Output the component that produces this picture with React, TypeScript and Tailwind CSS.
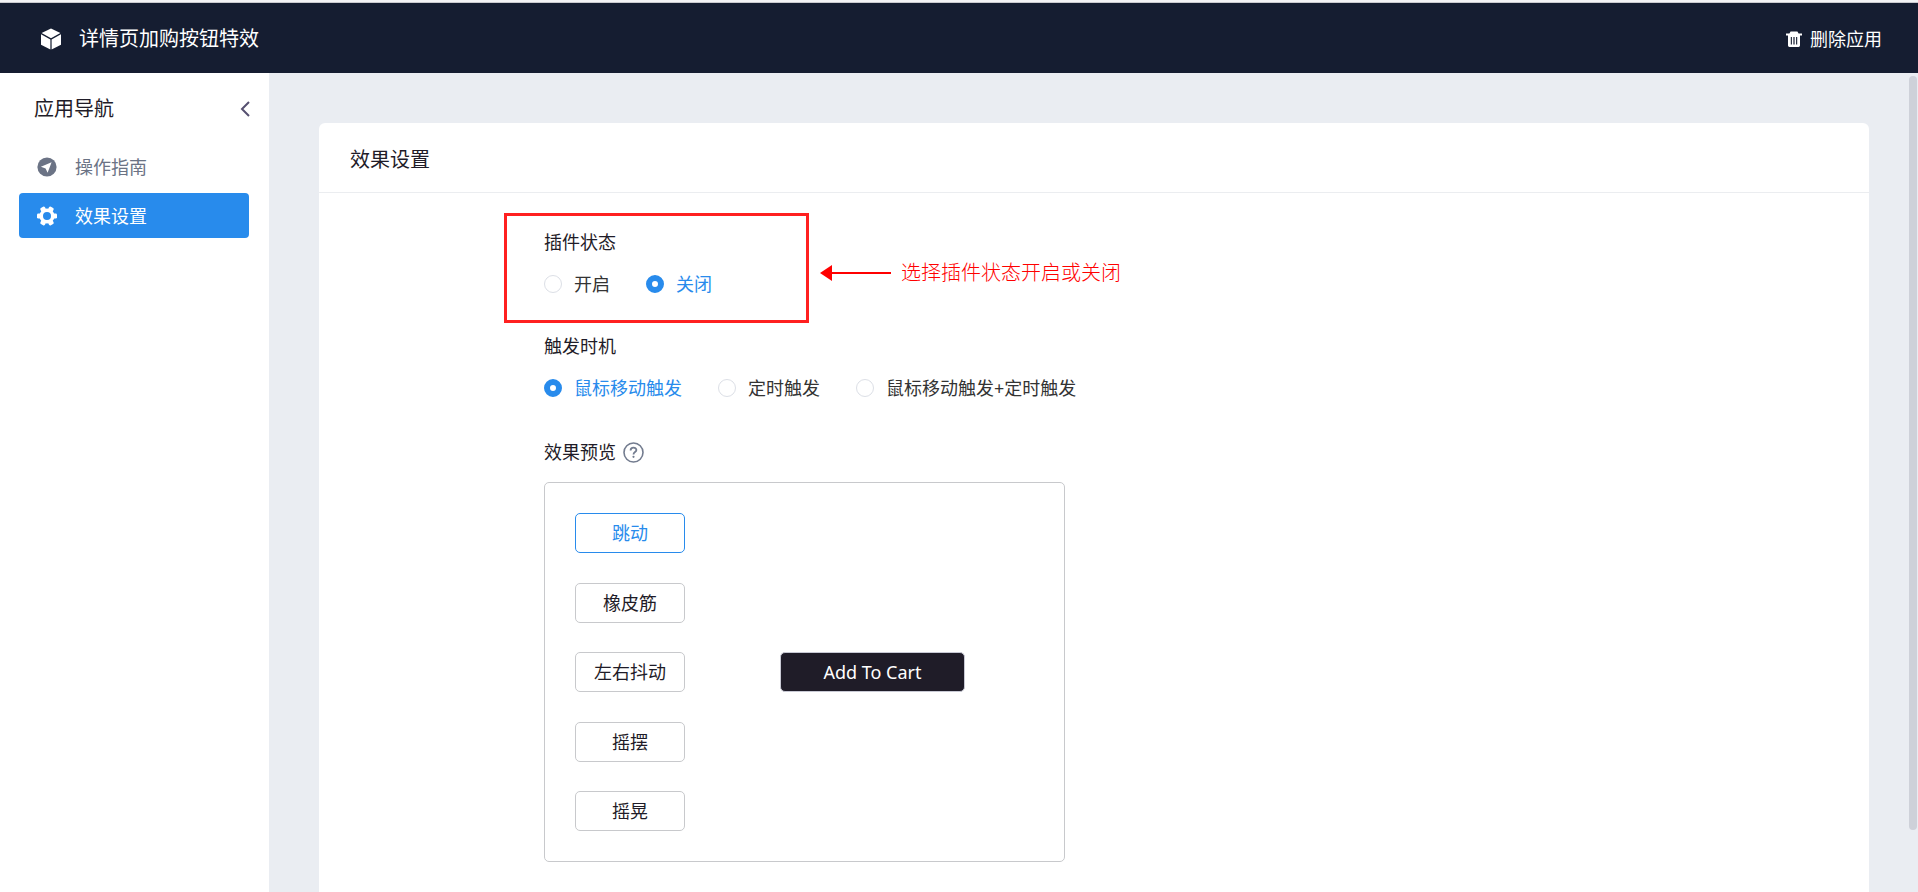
import { useState } from "react";

const EFFECTS = ["跳动", "橡皮筋", "左右抖动", "摇摆", "摇晃"];

function BoxIcon() {
    return <svg width="20" height="22" viewBox="0 0 20 22" fill="#fff">
        <path d="M10 0.4L19.4 5.1L10 10.3L0.6 5.1Z" />
        <path d="M0 6.3L9.4 11.5V21.6L0 16.8Z" />
        <path d="M20 6.3L10.6 11.5V21.6L20 16.8Z" />
    </svg>;
}

function TrashIcon() {
    return <svg width="16" height="16" viewBox="0 0 16 16" fill="#fff">
        <path d="M0 2.4H3.4L4.6 0.6H11.4L12.6 2.4H16V4.4H0Z" />
        <path fillRule="evenodd" d="M2 4H14V14.6Q14 16 12.6 16H3.4Q2 16 2 14.6ZM4.8 6V13.4H5.9V6ZM7.4 6V13.4H8.6V6ZM10.1 6V13.4H11.2V6Z" />
    </svg>;
}

function GuideIcon() {
    return <svg width="20" height="20" viewBox="0 0 20 20">
        <circle cx="10" cy="10" r="9.6" fill="#6b7385" />
        <path d="M14.6 5.2L3.9 9.8L8.6 11.4L10.6 15.8Z" fill="#fff" />
    </svg>;
}

function GearIcon() {
    return <svg width="20" height="20" viewBox="0 0 20 20" fill="#fff">
        <circle cx="10" cy="10" r="5.8" fill="none" stroke="#fff" strokeWidth="3.6" />
        <rect x="0" y="7.4" width="4" height="5.2" rx="1.4" />
        <rect x="0" y="7.4" width="4" height="5.2" rx="1.4" transform="rotate(60 10 10)" />
        <rect x="0" y="7.4" width="4" height="5.2" rx="1.4" transform="rotate(120 10 10)" />
        <rect x="0" y="7.4" width="4" height="5.2" rx="1.4" transform="rotate(180 10 10)" />
        <rect x="0" y="7.4" width="4" height="5.2" rx="1.4" transform="rotate(240 10 10)" />
        <rect x="0" y="7.4" width="4" height="5.2" rx="1.4" transform="rotate(300 10 10)" />
    </svg>;
}

function HelpIcon() {
    return <svg width="21" height="21" viewBox="0 0 21 21" fill="none" stroke="#737c8f">
        <circle cx="10.5" cy="10.5" r="9.5" strokeWidth="1.6" />
        <path d="M7.6 8.4C7.6 4.7 13.4 4.7 13.4 8.1C13.4 10.1 10.5 10.1 10.5 12.4" strokeWidth="1.8" />
        <circle cx="10.5" cy="14.8" r="1.1" fill="#737c8f" stroke="none" />
    </svg>;
}

function RadioGroup({ name, options, value, onChange }: {
    name: string;
    options: string[];
    value: string;
    onChange: (value: string) => void;
}) {
    return <div className="flex flex-row gap-9">
        {options.map((option) => (
            <label key={option} className="flex flex-row items-center gap-3 h-6 text-[#333] has-checked:text-[#288bec] cursor-pointer whitespace-nowrap">
                <input
                    type="radio"
                    name={name}
                    className="appearance-none size-[18px] rounded-full border border-[#dcdfe6] bg-white checked:border-[6px] checked:border-[#288bec]"
                    checked={value === option}
                    onChange={() => onChange(option)}
                />
                {option}
            </label>
        ))}
    </div>;
}

export default function App() {
    const [status, setStatus] = useState("关闭");
    const [trigger, setTrigger] = useState("鼠标移动触发");
    const [effect, setEffect] = useState("跳动");

    return <div className="h-screen flex flex-col overflow-hidden border-t-2 border-[#f3f3f5] text-[18px] leading-6 text-[#1f1c28] font-['Noto_Sans','Noto_Sans_CJK_SC',sans-serif]">
        <header className="shrink-0 h-[71px] flex flex-row items-center justify-between pl-[41px] pr-9 pt-px bg-[#151d31] text-white border-t border-[#c9cacf]">
            <div className="flex flex-row items-center gap-[18px] text-xl">
                <BoxIcon />
                <h1>详情页加购按钮特效</h1>
            </div>
            <button className="flex flex-row items-center gap-2 cursor-pointer">
                <TrashIcon />
                删除应用
            </button>
        </header>
        <div className="relative flex-1 min-h-0 flex flex-row">
            <aside className="shrink-0 w-[269px] bg-white pt-5">
                <div className="flex flex-row items-center justify-between h-8 pl-[34px] pr-[19px] text-xl">
                    <h2>应用导航</h2>
                    <button aria-label="收起" className="cursor-pointer">
                        <svg width="10" height="16" viewBox="0 0 10 16" fill="none" stroke="#565070" strokeWidth="2">
                            <path d="M9 1L2 8L9 15" />
                        </svg>
                    </button>
                </div>
                <nav className="flex flex-col gap-1 mt-[19px] pl-[19px] pr-5">
                    <a href="#guide" className="flex flex-row items-center gap-[18px] h-[45px] pl-[18px] text-[#6b7385]">
                        <GuideIcon />
                        操作指南
                    </a>
                    <a href="#settings" className="flex flex-row items-center gap-[18px] h-[45px] pl-[18px] rounded bg-[#288bec] text-white">
                        <GearIcon />
                        效果设置
                    </a>
                </nav>
            </aside>
            <main className="flex-1 min-w-0 overflow-hidden bg-[#eaedf2] pt-[50px] pl-[50px] pr-[49px]">
                <section className="bg-white rounded-md pb-16">
                    <h2 className="h-[70px] flex items-center pl-[31px] pt-1 text-xl border-b border-[#ebedf0]">效果设置</h2>
                    <div className="pl-[185px]">
                        {/* 标注区域 */}
                        <div className="flex flex-row items-center pt-5">
                            <div className="w-[305px] h-[110px] pl-[37px] pt-[14px] border-3 border-[#ff2020]">
                                <h3 className="mb-[18px]">插件状态</h3>
                                <RadioGroup name="status" options={["开启", "关闭"]} value={status} onChange={setStatus} />
                            </div>
                            <div className="flex flex-row items-center gap-[10px] pl-[11px] pt-[10px] text-xl font-light text-[#ff0000]">
                                <svg width="71" height="16" viewBox="0 0 71 16" fill="#f00">
                                    <path d="M0 8L12 0V16Z" />
                                    <rect x="11" y="7" width="60" height="2" />
                                </svg>
                                选择插件状态开启或关闭
                            </div>
                        </div>
                        <div className="pl-10">
                            <h3 className="mt-[11px] mb-[18px]">触发时机</h3>
                            <RadioGroup name="trigger" options={["鼠标移动触发", "定时触发", "鼠标移动触发+定时触发"]} value={trigger} onChange={setTrigger} />
                            <div className="flex flex-row items-center gap-[7px] mt-10 mb-[18px]">
                                <h3>效果预览</h3>
                                <HelpIcon />
                            </div>
                            <div className="w-[521px] h-[380px] flex flex-row items-center border border-[#c8c9cc] rounded-[5px] p-[30px]">
                                <div className="flex flex-col justify-between h-full">
                                    {EFFECTS.map((name) => (
                                        <button
                                            key={name}
                                            className={`w-[110px] h-10 border rounded-[5px] cursor-pointer ${effect === name ? "border-[#288bec] text-[#288bec]" : "border-[#c8c9cc]"}`}
                                            onClick={() => setEffect(name)}
                                        >
                                            {name}
                                        </button>
                                    ))}
                                </div>
                                <button className="w-[185px] h-10 ml-[95px] border border-[#c8c9d4] rounded-[5px] bg-[#1f1c28] text-white cursor-pointer">Add To Cart</button>
                            </div>
                        </div>
                    </div>
                </section>
            </main>
            <div className="absolute top-[3px] right-px w-2 h-[754px] rounded-full bg-[#ced1d9]" />
        </div>
    </div>;
}
